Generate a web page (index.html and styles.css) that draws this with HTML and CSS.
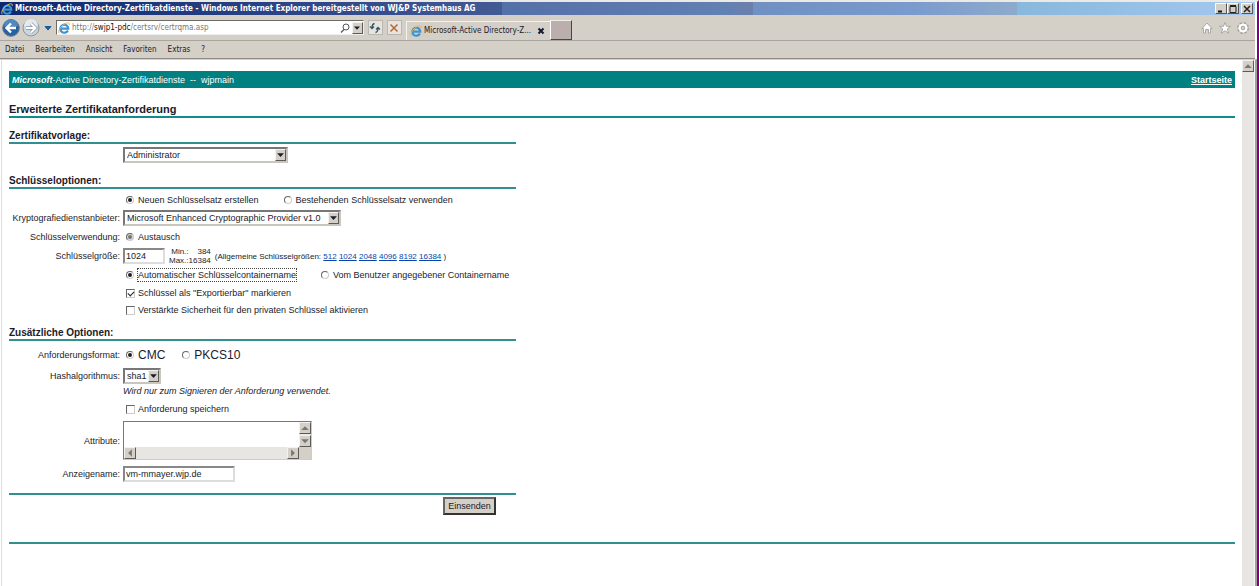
FILE: index.html
```html
<!DOCTYPE html>
<html lang="de">
<head>
<meta charset="utf-8">
<title>Microsoft-Active Directory-Zertifikatdienste</title>
<link rel="stylesheet" href="styles.css">
</head>
<body>
<svg class="defs" aria-hidden="true">
  <symbol id="ie" viewBox="0 0 12 12">
    <path d="M9.900 8.500A4 4 0 1 1 10.300 6.700H3.500" fill="none" stroke="#3f93cf" stroke-width="2.200"/>
    <path d="M1.300 11.300C-.6 9.500 2.600 4 7 1.700 10 .200 12 .600 11.200 3" fill="none" stroke="#e0b860" stroke-width="1"/>
  </symbol>
  <symbol id="down" viewBox="0 0 8 8"><path d="M1 2.500h6L4 5.800z" fill="currentColor"/></symbol>
  <symbol id="up" viewBox="0 0 8 8"><path d="M1 5.500h6L4 2.500z" fill="currentColor"/></symbol>
  <symbol id="left" viewBox="0 0 8 8"><path d="M5.500 1v6L2.500 4z" fill="currentColor"/></symbol>
  <symbol id="right" viewBox="0 0 8 8"><path d="M2.500 1v6L5.500 4z" fill="currentColor"/></symbol>
</svg>
<div class="window">
  <header class="titlebar">
    <svg class="icon"><use href="#ie"/></svg>
    <span class="title">Microsoft-Active Directory-Zertifikatdienste - Windows Internet Explorer bereitgestellt von WJ&amp;P Systemhaus AG</span>
    <div class="winbuttons">
      <button type="button" class="winbtn" aria-label="Minimieren"><svg viewBox="0 0 8 8"><path d="M1 6.500h4" stroke="#111" stroke-width="2"/></svg></button>
      <button type="button" class="winbtn" aria-label="Maximieren"><svg viewBox="0 0 8 8"><path d="M1 1.500h6v6H1z" fill="none" stroke="#222"/><path d="M1 1h6" stroke="#222" stroke-width="2"/></svg></button>
      <button type="button" class="winbtn close" aria-label="Schließen"><svg viewBox="0 0 8 8"><path d="M1 1l6 6M7 1L1 7" stroke="#222" stroke-width="1.500"/></svg></button>
    </div>
  </header>
  <nav class="navbar">
    <button type="button" class="plain" aria-label="Zurück"><svg class="nav-arrow" viewBox="0 0 18 18"><circle cx="9" cy="9" r="8.300" fill="#2561a4" stroke="#697786"/><path d="M2 7a7 7 0 0 1 14 0q-7 3-14 0" fill="#5089bd"/><path d="M14 9H5M9 4.500L4.500 9 9 13.500" fill="none" stroke="#fff" stroke-width="2.400"/></svg></button>
    <button type="button" class="plain" aria-label="Vorwärts"><svg class="nav-arrow" viewBox="0 0 18 18"><circle cx="9" cy="9" r="8" fill="#cbd5de" stroke="#8b969f"/><path d="M2 7a7 7 0 0 1 14 0q-7 3-14 0" fill="#e5eaee"/><path d="M4 9h9M9 4.500l4.500 4.500L9 13.500" fill="none" stroke="#8497a5" stroke-width="3.400"/><path d="M4 9h9M9 4.500l4.500 4.500L9 13.500" fill="none" stroke="#fff" stroke-width="2"/></svg></button>
    <button type="button" class="plain history" aria-label="Verlauf"><svg viewBox="0 0 8 8"><path d="M1 2.500h6L4 6z" fill="#1c5b95" stroke="#1c5b95"/></svg></button>
    <div class="address">
      <svg class="icon"><use href="#ie"/></svg>
      <a class="url" href="#">http://<b>swjp1-pdc</b>/certsrv/certrqma.asp</a>
      <svg class="search" viewBox="0 0 10 10"><circle cx="6" cy="4" r="3" fill="none" stroke="#555"/><path d="M4 6.500L1 9.500" stroke="#555" stroke-width="1.300"/></svg>
      <button type="button" class="bevel drop" aria-label="Adressliste"><svg><use href="#down"/></svg></button>
    </div>
    <button type="button" class="tool" aria-label="Aktualisieren"><svg viewBox="0 0 12 12"><path d="M5.500 1.500Q3 2 3 6M1 4.500l2 2 2-2M6.500 10.500Q9 10 9 6M7 7.500l2-2 2 2" fill="none" stroke="#315568" stroke-width="1.300"/></svg></button>
    <button type="button" class="tool" aria-label="Abbrechen"><svg viewBox="0 0 12 12"><path d="M2.500 2.500l7 7M9.500 2.500l-7 7" stroke="#b16b36" stroke-width="1.500"/></svg></button>
    <div class="tab">
      <svg class="icon"><use href="#ie"/></svg>
      <span>Microsoft-Active Directory-Z...</span>
      <button type="button" class="plain tabclose" aria-label="Registerkarte schließen"><svg viewBox="0 0 8 8"><path d="M1.500 1.500l5 5M6.500 1.500l-5 5" stroke="#16182f" stroke-width="2"/></svg></button>
    </div>
    <button type="button" class="newtab" aria-label="Neue Registerkarte"></button>
    <div class="actions">
      <button type="button" class="plain" aria-label="Startseite"><svg viewBox="0 0 12 12"><path d="M1 6.500L6 1l5 5.500H9.500V11h-2V7.500h-3V11h-2V6.500z" fill="#fff" stroke="#9b9995" stroke-width=".8"/></svg></button>
      <button type="button" class="plain" aria-label="Favoriten"><svg viewBox="0 0 12 12"><path d="M6 .5l1.500 3.800h4L8.300 6.900l1.300 4.300L6 8.700l-3.600 2.500 1.300-4.300L.5 4.300h4z" fill="#fff" stroke="#9b9995" stroke-width=".8"/></svg></button>
      <button type="button" class="plain" aria-label="Extras"><svg viewBox="0 0 12 12"><circle cx="6" cy="6" r="4.700" fill="none" stroke="#9b9995" stroke-width="2.400" stroke-dasharray="2.200 1.490"/><circle cx="6" cy="6" r="3.300" fill="none" stroke="#fff" stroke-width="2.600"/><circle cx="6" cy="6" r="1.800" fill="#d4cfc7" stroke="#9b9995" stroke-width=".8"/></svg></button>
    </div>
  </nav>
  <nav class="menubar">
    <a href="#">Datei</a><a href="#">Bearbeiten</a><a href="#">Ansicht</a><a href="#">Favoriten</a><a href="#">Extras</a><a href="#">?</a>
  </nav>
  <div class="viewport">
    <main class="page">
      <div class="banner">
        <span><b><i>Microsoft</i></b>-Active Directory-Zertifikatdienste &nbsp;--&nbsp; wjpmain</span>
        <a href="#">Startseite</a>
      </div>
      <h1>Erweiterte Zertifikatanforderung</h1>
      <form class="form">
        <h2>Zertifikatvorlage:</h2>
        <div class="row first">
          <span class="select template"><select aria-label="Zertifikatvorlage"><option>Administrator</option></select><svg class="bevel"><use href="#down"/></svg></span>
        </div>
        <h2>Schlüsseloptionen:</h2>
        <div class="row">
          <div class="choices">
            <label class="choice"><input type="radio" name="keyset" checked>Neuen Schlüsselsatz erstellen</label>
            <label class="choice"><input type="radio" name="keyset">Bestehenden Schlüsselsatz verwenden</label>
          </div>
        </div>
        <div class="row">
          <label class="name" for="csp">Kryptografiedienstanbieter:</label>
          <span class="select provider"><select id="csp"><option>Microsoft Enhanced Cryptographic Provider v1.0</option></select><svg class="bevel"><use href="#down"/></svg></span>
        </div>
        <div class="row medium">
          <span class="name">Schlüsselverwendung:</span>
          <label class="choice"><input type="radio" name="usage" checked disabled>Austausch</label>
        </div>
        <div class="row">
          <label class="name" for="size">Schlüsselgröße:</label>
          <div class="keysize">
            <input class="field size" id="size" value="1024">
            <div class="limits"><span>Min.:</span><span>384</span><span>Max.:</span><span>16384</span></div>
            <div class="common">(Allgemeine Schlüsselgrößen: <a href="#">512</a> <a href="#">1024</a> <a href="#">2048</a> <a href="#">4096</a> <a href="#">8192</a> <a href="#">16384</a> )</div>
          </div>
        </div>
        <div class="row medium">
          <div class="choices">
            <label class="choice"><input type="radio" name="container" checked><span class="focus">Automatischer Schlüsselcontainername</span></label>
            <label class="choice"><input type="radio" name="container">Vom Benutzer angegebener Containername</label>
          </div>
        </div>
        <div class="row short">
          <label class="choice"><input type="checkbox" checked>Schlüssel als "Exportierbar" markieren</label>
        </div>
        <div class="row">
          <label class="choice"><input type="checkbox">Verstärkte Sicherheit für den privaten Schlüssel aktivieren</label>
        </div>
        <h2 class="extra">Zusätzliche Optionen:</h2>
        <div class="row tall">
          <span class="name">Anforderungsformat:</span>
          <div class="choices large">
            <label class="choice"><input type="radio" name="format" checked>CMC</label>
            <label class="choice"><input type="radio" name="format">PKCS10</label>
          </div>
        </div>
        <div class="row">
          <label class="name" for="hash">Hashalgorithmus:</label>
          <span class="select hash"><select id="hash"><option>sha1</option></select><svg class="bevel"><use href="#down"/></svg></span>
        </div>
        <div class="row tight"><i class="hint">Wird nur zum Signieren der Anforderung verwendet.</i></div>
        <div class="row tall">
          <label class="choice"><input type="checkbox">Anforderung speichern</label>
        </div>
        <div class="row">
          <label class="name" for="attrs">Attribute:</label>
          <div class="memo">
            <textarea id="attrs"></textarea>
            <div class="vbar"><svg class="bevel"><use href="#up"/></svg><svg class="bevel"><use href="#down"/></svg></div>
            <div class="hbar"><svg class="bevel"><use href="#left"/></svg><svg class="bevel"><use href="#right"/></svg></div>
          </div>
        </div>
        <div class="row tall last">
          <label class="name" for="display">Anzeigename:</label>
          <input class="field display" id="display" value="vm-mmayer.wjp.de">
        </div>
        <div class="submit"><button type="submit">Einsenden</button></div>
      </form>
      <hr>
    </main>
    <div class="scrollbar"><svg class="bevel"><use href="#up"/></svg></div>
  </div>
</div>
</body>
</html>
```
FILE: styles.css
```css
* { box-sizing: border-box; }
body {
  margin: 0;
  font: 9px/12px "Liberation Sans", Arial, sans-serif;
  color: #1b1b2b;
  background: #fff;
}
button, input, select, textarea { font: inherit; color: inherit; margin: 0; }
button { padding: 0; }
svg { display: block; flex: none; }
.defs { position: absolute; width: 0; height: 0; }
.window {
  display: flex;
  flex-direction: column;
  min-height: 100vh;
  border-top: 2px solid #eceae5;
  border-right: 2px solid #800080;
}
.icon { width: 12px; height: 12px; }
.plain { background: none; border: 0; }
.bevel {
  background: #d4cfc7;
  border: 1px solid;
  border-color: #f4f2ee #5d5a57 #5d5a57 #f4f2ee;
}

.titlebar {
  display: flex;
  align-items: center;
  height: 13px;
  margin-right: 2px;
  padding: 0 2px 0 1px;
  gap: 2px;
  color: #fff;
  font: bold 8px/12px "DejaVu Sans Condensed", "DejaVu Sans", sans-serif;
  background: linear-gradient(90deg, #0d2870, #445a95 40%, #5470a8 40%, #6380b3 58%, #6b80ab 60%, #7090c2 60%, #7b9bce 73%, #8eaacb 81%, #88b8dc 81%, #a5c8f0);
}
.titlebar .title { flex: 1; white-space: nowrap; }
.winbuttons { display: flex; }
.winbtn {
  width: 12px;
  height: 11px;
  background: #d4cfc7;
  border: 1px solid;
  border-color: #fff #555 #555 #fff;
}
.winbtn svg { width: 8px; height: 8px; margin: auto; }
.close { margin-left: 2px; }

.navbar {
  display: flex;
  align-items: center;
  height: 26px;
  margin-right: 2px;
  padding-left: 2px;
  background: #d4cfc7;
  border-bottom: 1px solid #a9a6a1;
  font: 8px/12px "DejaVu Sans Condensed", "DejaVu Sans", sans-serif;
}
.nav-arrow { width: 18px; height: 18px; margin-right: 2px; }
.history { margin: 0 4px 0 2px; }
.history svg { width: 8px; height: 8px; }
.address {
  display: flex;
  align-items: center;
  width: 308px;
  height: 15px;
  padding-left: 1px;
  gap: 2px;
  background: #fff;
  border: 1px solid #6f6c68;
  border-right-color: #eee;
  border-bottom-color: #eee;
}
.url { flex: 1; color: #777; text-decoration: none; }
.url b { font-weight: normal; color: #111; }
.search { width: 10px; height: 10px; }
.drop { width: 11px; height: 12px; }
.drop svg { width: 8px; height: 8px; }
.tool {
  width: 15px;
  height: 15px;
  margin-left: 4px;
  background: #e7e4df;
  border: 1px solid #bbb7b0;
}
.tool svg { width: 12px; height: 12px; }
.tab {
  display: flex;
  align-items: center;
  align-self: flex-end;
  width: 144px;
  height: 19px;
  margin-left: 4px;
  padding: 0 5px 0 3px;
  gap: 2px;
  white-space: nowrap;
  border: 1px solid #f4f2ee;
  border-width: 1px 0 0 1px;
}
.tab span { flex: 1; }
.tabclose svg { width: 8px; height: 8px; }
.newtab {
  align-self: flex-end;
  width: 22px;
  height: 20px;
  background: #bbafae;
  border: 1px solid;
  border-color: #eee #49434a #49434a #fff;
}
.actions { display: flex; gap: 6px; margin-left: auto; padding-right: 6px; }
.actions svg { width: 12px; height: 12px; }

.menubar {
  display: flex;
  align-items: center;
  gap: 11px;
  height: 18px;
  margin-right: 2px;
  padding-left: 5px;
  background: #d4cfc7;
  border-bottom: 1px solid #8e8b87;
  font: 8px/12px "DejaVu Sans Condensed", "DejaVu Sans", sans-serif;
}
.menubar a { color: #222; text-decoration: none; }

.viewport {
  display: flex;
  flex: 1;
  border-top: 1px solid #d4cfc7;
  border-right: 2px solid #a29f9b;
}
.page {
  flex: 1;
  margin-left: 1px;
  padding: 11px 7px 0;
  border-left: 1px solid #dedede;
}
.scrollbar { width: 13px; background: #e8e6e2; border-right: 1px solid #f6f6f6; }
.scrollbar svg { width: 12px; height: 12px; color: #777; }
.banner {
  display: flex;
  justify-content: space-between;
  align-items: center;
  height: 17px;
  padding: 0 3px;
  color: #fff;
  background: #008080;
}
.banner a { color: #fff; font-weight: bold; }
h1 {
  margin: 14px 0 0;
  font-size: 11px;
  line-height: 14px;
  border-bottom: 2px solid #118c88;
}
.form { width: 507px; margin-top: 12px; }
h2 {
  margin: 5px 0 2px;
  font-size: 10px;
  line-height: 12px;
  border-bottom: 2px solid #31908f;
}
.extra { margin-top: 8px; }
.row {
  display: grid;
  grid-template-columns: 111px 1fr;
  column-gap: 3px;
  align-items: center;
  min-height: 18px;
}
.row > :last-child { grid-column: 2; justify-self: start; }
.first { margin-bottom: 11px; }
.tall { min-height: 24px; }
.medium { min-height: 20px; }
.short { min-height: 16px; }
.tight { min-height: 12px; }
.last { margin-top: 2px; }
.name { text-align: right; white-space: nowrap; }
.choices { display: flex; gap: 22px; white-space: nowrap; }
.choice { display: flex; align-items: center; gap: 3px; padding-left: 3px; white-space: nowrap; }
.large { gap: 14px; font-size: 12px; }
.focus { outline: 1px dotted #444; }

input[type="radio"], input[type="checkbox"] {
  appearance: none;
  display: grid;
  place-items: center;
  width: 9px;
  height: 9px;
  background: #fff;
  border: 1px solid;
  border-color: #666 #ccc #ccc #666;
}
input[type="radio"] { width: 8px; height: 8px; margin-right: 1px; border-radius: 50%; }
input[type="radio"]:checked::before { content: ""; width: 4px; height: 4px; border-radius: 50%; background: #222; }
input[type="radio"]:disabled { background: #d9d6d1; }
input[type="radio"]:disabled::before { background: #777; }
input[type="checkbox"]:checked::before {
  content: "";
  width: 5px;
  height: 3px;
  border: solid #222;
  border-width: 0 0 1px 1px;
  transform: rotate(-45deg);
}
.select {
  display: flex;
  height: 16px;
  background: #fff;
  border: 2px solid;
  border-color: #777 #c9c5bf #c9c5bf #777;
}
.select select {
  appearance: none;
  flex: 1;
  min-width: 0;
  padding: 0 0 0 2px;
  background: none;
  border: 0;
  outline: 0;
}
.select svg { width: 11px; height: 12px; }
.template { width: 165px; }
.provider { width: 218px; }
.hash { width: 38px; }
.field {
  height: 16px;
  padding: 0 1px;
  background: #fff;
  border: 2px solid;
  border-color: #888 #ddd #ddd #888;
}
.size { width: 42px; }
.display { width: 112px; }
.keysize { display: flex; align-items: center; gap: 4px; white-space: nowrap; font-size: 8px; line-height: 9px; }
.keysize .size { font-size: 9px; }
.limits { display: grid; grid-template-columns: auto auto; text-align: right; }
.common a { color: #0645ad; }
.memo {
  display: grid;
  grid-template-columns: 1fr 12px;
  grid-template-rows: 1fr 12px;
  width: 189px;
  height: 39px;
  background: #d4cfc7;
  border: 1px solid;
  border-color: #777 #ccc #ccc #777;
}
.memo textarea { width: 100%; height: 100%; border: 0; resize: none; overflow: hidden; background: #fff; }
.vbar, .hbar { display: flex; justify-content: space-between; background: #e8e6e2; }
.vbar { flex-direction: column; }
.memo svg { width: 12px; height: 12px; color: #777; }
.submit { display: flex; justify-content: flex-end; margin-top: 7px; padding: 2px 20px 0; border-top: 2px solid #31908f; }
.submit button {
  width: 53px;
  height: 18px;
  background: #d4cfc7;
  border: 2px solid;
  border-color: #666 #333 #333 #666;
}
hr { margin: 27px 0 0; border: 0; border-top: 2px solid #31908f; }
```
